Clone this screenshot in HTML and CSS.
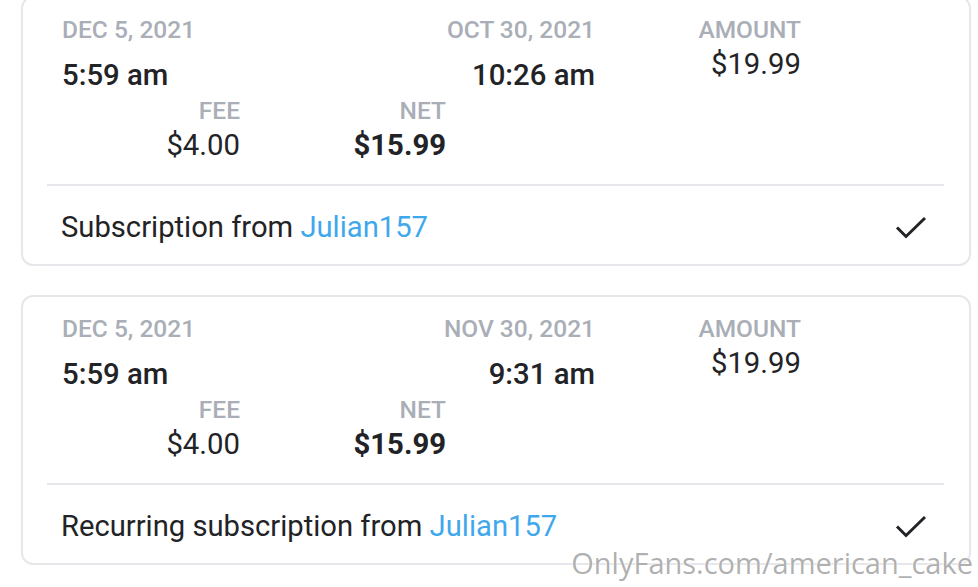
FILE: index.html
```html
<!DOCTYPE html>
<html lang="en">
<head>
    <meta charset="UTF-8">
    <meta name="viewport" content="width=device-width, initial-scale=1.0">
    <title>Earnings</title>
    <link rel="stylesheet" href="styles.css">
</head>
<body>
    <div class="statements">
        <div class="txn-card">
            <div class="txn-details">
                <div class="cell cell-date">
                    <div class="label">Dec 5, 2021</div>
                    <div class="value time">5:59 am</div>
                </div>
                <div class="cell cell-date2">
                    <div class="label">Oct 30, 2021</div>
                    <div class="value time">10:26 am</div>
                </div>
                <div class="cell cell-amount">
                    <div class="label">Amount</div>
                    <div class="value">$19.99</div>
                </div>
                <div class="cell cell-fee">
                    <div class="label">Fee</div>
                    <div class="value">$4.00</div>
                </div>
                <div class="cell cell-net">
                    <div class="label">Net</div>
                    <div class="value net">$15.99</div>
                </div>
            </div>
            <div class="txn-footer">
                <span class="txn-desc">Subscription from <a class="user-link" href="#">Julian157</a></span>
                <svg class="check" width="32" height="24" viewBox="0 0 32 24">
                    <path d="M2 11.5 L11 20.5 L30 2" fill="none" stroke="#222326" stroke-width="3"/>
                </svg>
            </div>
        </div>

        <div class="txn-card">
            <div class="txn-details">
                <div class="cell cell-date">
                    <div class="label">Dec 5, 2021</div>
                    <div class="value time">5:59 am</div>
                </div>
                <div class="cell cell-date2">
                    <div class="label">Nov 30, 2021</div>
                    <div class="value time">9:31 am</div>
                </div>
                <div class="cell cell-amount">
                    <div class="label">Amount</div>
                    <div class="value">$19.99</div>
                </div>
                <div class="cell cell-fee">
                    <div class="label">Fee</div>
                    <div class="value">$4.00</div>
                </div>
                <div class="cell cell-net">
                    <div class="label">Net</div>
                    <div class="value net">$15.99</div>
                </div>
            </div>
            <div class="txn-footer">
                <span class="txn-desc">Recurring subscription from <a class="user-link" href="#">Julian157</a></span>
                <svg class="check" width="32" height="24" viewBox="0 0 32 24">
                    <path d="M2 11.5 L11 20.5 L30 2" fill="none" stroke="#222326" stroke-width="3"/>
                </svg>
            </div>
        </div>
    </div>

    <div class="watermark">OnlyFans.com/american_cake</div>
</body>
</html>
```

FILE: styles.css
```css
body {
    font-family: Roboto, 'Liberation Sans', sans-serif;
    background-color: #fff;
    color: #222326;
    margin: 0;
    width: 978px;
    height: 587px;
    overflow: hidden;
    position: relative;
}
.statements {
    display: flex;
    flex-direction: column;
    gap: 29px;
    margin-top: -4px;
    padding-left: 21px;
}
.txn-card {
    width: 950px;
    height: 270px;
    box-sizing: border-box;
    border: 2px solid #e7e7eb;
    border-radius: 12px;
    background-color: #fff;
}
.txn-details {
    display: grid;
    grid-template-columns: 178px 206px 149px 206px;
    row-gap: 2px;
    padding: 18px 0 19px 39px;
}
.cell-date {
    grid-column: 1;
    grid-row: 1;
    text-align: left;
}
.cell-date2 {
    grid-column: 2 / 4;
    grid-row: 1;
    text-align: right;
}
.cell-amount {
    grid-column: 4;
    grid-row: 1;
    text-align: right;
}
.cell-fee {
    grid-column: 1;
    grid-row: 2;
    text-align: right;
}
.cell-net {
    grid-column: 2;
    grid-row: 2;
    text-align: right;
}
.label {
    font-size: 24.5px;
    line-height: 28px;
    color: #a9aeb7;
    text-transform: uppercase;
    font-weight: 500;
    white-space: nowrap;
}
.value {
    font-size: 29.3px;
    line-height: 40px;
    white-space: nowrap;
}
.value.time {
    font-weight: 500;
    margin-top: 11px;
}
.value.net {
    font-weight: 700;
}
.txn-footer {
    margin: 0 25px 0 24px;
    border-top: 2px solid #e7e7eb;
    display: flex;
    align-items: center;
    justify-content: space-between;
    padding: 23px 17px 0 14px;
}
.txn-desc {
    font-size: 29.2px;
    line-height: 36px;
    white-space: nowrap;
}
.user-link {
    color: #3fa8ec;
    text-decoration: none;
}
.check {
    display: block;
    margin-top: 1px;
}
.watermark {
    position: absolute;
    right: 5px;
    bottom: 7px;
    font-family: 'Open Sans', 'Noto Sans', sans-serif;
    font-size: 29px;
    line-height: 34px;
    color: rgba(150, 150, 150, 0.75);
    text-shadow: 0 0 2px #fff, 0 0 2px #fff;
    white-space: nowrap;
}
```
